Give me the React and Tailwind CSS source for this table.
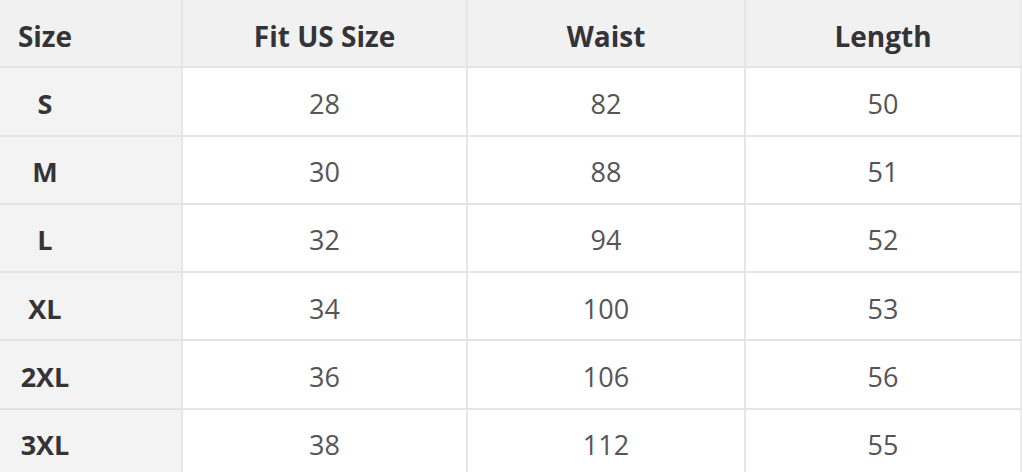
import React from "react";

const rows = [
  { size: "S", us: "28", waist: "82", length: "50" },
  { size: "M", us: "30", waist: "88", length: "51" },
  { size: "L", us: "32", waist: "94", length: "52" },
  { size: "XL", us: "34", waist: "100", length: "53" },
  { size: "2XL", us: "36", waist: "106", length: "56" },
  { size: "3XL", us: "38", waist: "112", length: "55" },
];

const cols = "grid grid-cols-[183px_285px_278px_276px]";

export default function App() {
  return (
    <div
      className="w-[1022px] h-[472px] overflow-hidden bg-white"
      style={{ fontFamily: '"Open Sans", "Noto Sans", sans-serif' }}
    >
      {/* header */}
      <div className={`${cols} h-[68.3px] bg-[#f1f1f1] border-b-2 border-[#e4e4e4] text-[28px] font-bold text-[#333338]`}>
        <div className="flex items-center pt-[5px] border-r-2 border-[#e6e6e6]">
          <span className="w-[90px] text-center">Size</span>
        </div>
        <div className="flex items-center justify-center pt-[5px] border-r-2 border-[#e6e6e6]">
          Fit US Size
        </div>
        <div className="flex items-center justify-center pt-[5px] border-r-2 border-[#e6e6e6]">
          Waist
        </div>
        <div className="flex items-center justify-center pt-[5px] border-r-2 border-[#ececec]">
          Length
        </div>
      </div>

      {/* body */}
      {rows.map((r) => (
        <div
          key={r.size}
          className={`${cols} h-[68.3px] border-b-2 border-[#e4e4e4] text-[27px]`}
        >
          <div className="flex items-center pt-[5px] bg-[#f3f3f3] border-r-2 border-[#e6e6e6] font-bold text-[#333338]">
            <span className="w-[90px] text-center">{r.size}</span>
          </div>
          <div className="flex items-center justify-center pt-[5px] border-r-2 border-[#e6e6e6] text-[#555558]">
            {r.us}
          </div>
          <div className="flex items-center justify-center pt-[5px] border-r-2 border-[#e6e6e6] text-[#555558]">
            {r.waist}
          </div>
          <div className="flex items-center justify-center pt-[5px] border-r-2 border-[#ececec] text-[#555558]">
            {r.length}
          </div>
        </div>
      ))}
    </div>
  );
}
